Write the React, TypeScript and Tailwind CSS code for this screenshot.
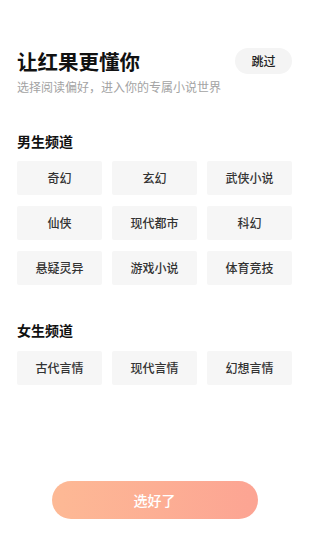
import React from 'react';

const font = { fontFamily: '"Noto Sans CJK SC", "Noto Sans", sans-serif' };

const maleTags = ['奇幻', '玄幻', '武侠小说', '仙侠', '现代都市', '科幻', '悬疑灵异', '游戏小说', '体育竞技'];
const femaleTags = ['古代言情', '现代言情', '幻想言情'];

const TagGrid: React.FC<{ tags: string[] }> = ({ tags }) => (
  <div className="grid grid-cols-3 gap-x-[10px] gap-y-[11px]">
    {tags.map((t) => (
      <button
        key={t}
        className="h-[34px] bg-[#f6f6f6] rounded-[2px] text-[12px] font-medium text-[#333333] flex items-center justify-center"
      >
        {t}
      </button>
    ))}
  </div>
);

const App: React.FC = () => {
  return (
    <div className="w-[309px] h-[550px] bg-white flex flex-col" style={font}>
      {/* Header */}
      <div className="flex justify-between items-start pl-[17px] pr-[17px] pt-[48px]">
        <div>
          <h1 className="text-[20.5px] leading-[26px] font-bold text-[#111111]">让红果更懂你</h1>
          <p className="mt-[5px] text-[12px] leading-[16px] text-[#a3a3a3]">选择阅读偏好，进入你的专属小说世界</p>
        </div>
        <button className="w-[57px] h-[26px] rounded-full bg-[#f4f4f4] text-[12px] font-medium text-[#222222] flex items-center justify-center">
          跳过
        </button>
      </div>

      {/* Male */}
      <div className="px-[17px] mt-[36px]">
        <h2 className="text-[14px] leading-[20px] font-bold text-[#111111]">男生频道</h2>
        <div className="mt-[10px]">
          <TagGrid tags={maleTags} />
        </div>
      </div>

      {/* Female */}
      <div className="px-[17px] mt-[35px]">
        <h2 className="text-[14px] leading-[20px] font-bold text-[#111111]">女生频道</h2>
        <div className="mt-[11px]">
          <TagGrid tags={femaleTags} />
        </div>
      </div>

      {/* Confirm */}
      <div className="flex justify-center mt-auto mb-[31px]">
        <button className="w-[206px] h-[38px] rounded-full bg-gradient-to-r from-[#fdb995] to-[#fca493] text-white text-[14px] font-medium flex items-center justify-center">
          选好了
        </button>
      </div>
    </div>
  );
};

export default App;
